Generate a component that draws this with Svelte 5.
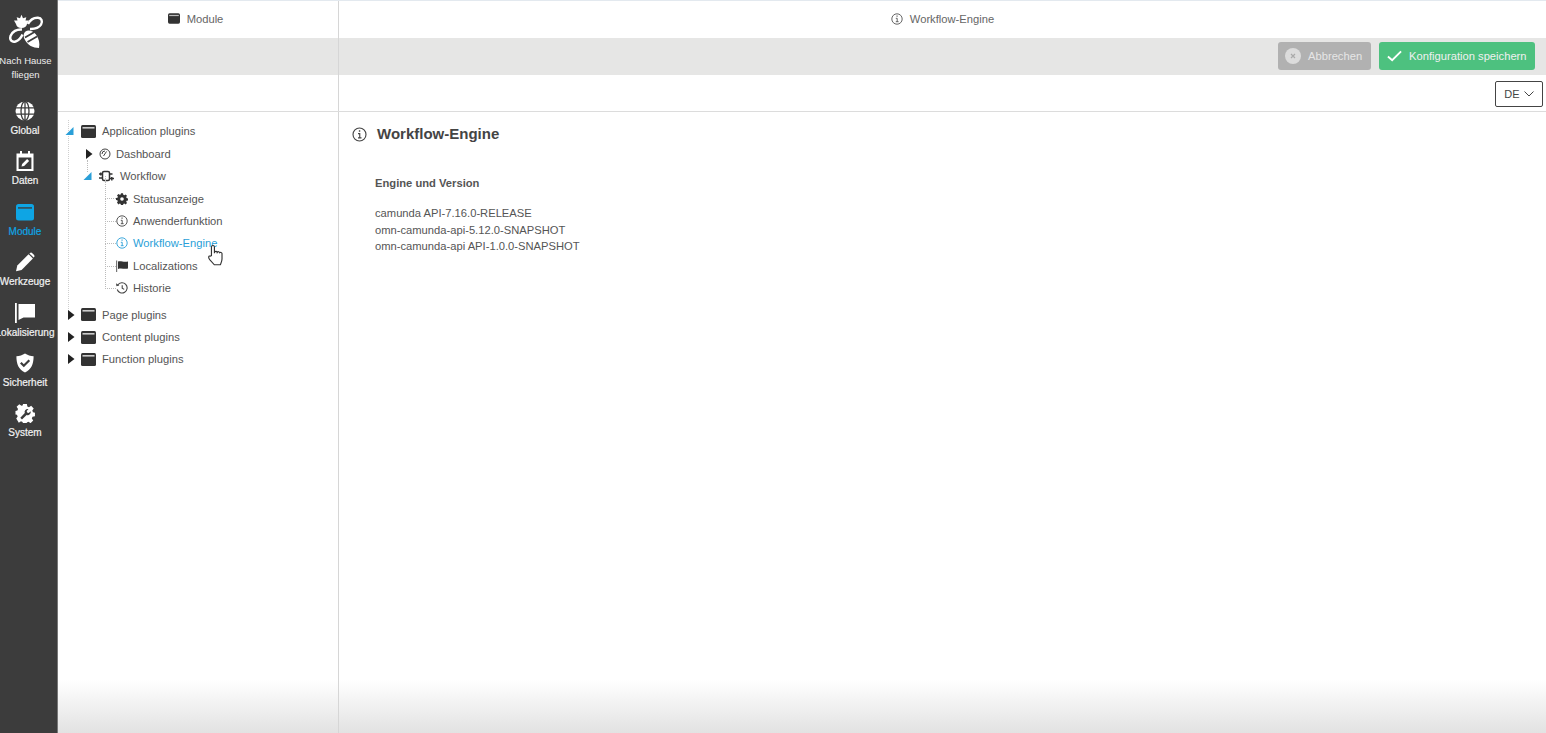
<script>
  const nav = [
    { id: 'globe', label: 'Global' },
    { id: 'cal', label: 'Daten' },
    { id: 'card', label: 'Module', active: true },
    { id: 'pencil', label: 'Werkzeuge' },
    { id: 'flag', label: 'Lokalisierung' },
    { id: 'shield', label: 'Sicherheit' },
    { id: 'gear', label: 'System' }
  ];
  const wf = [
    { id: 'cog', label: 'Statusanzeige' },
    { id: 'info', label: 'Anwenderfunktion' },
    { id: 'info', label: 'Workflow-Engine', active: true },
    { id: 'flagS', label: 'Localizations' },
    { id: 'hist', label: 'Historie' }
  ];
  const others = ['Page plugins', 'Content plugins', 'Function plugins'];
  const lines = ['camunda API-7.16.0-RELEASE', 'omn-camunda-api-5.12.0-SNAPSHOT', 'omn-camunda-api API-1.0.0-SNAPSHOT'];
</script>

{#snippet icon(id)}
  {#if id === 'globe'}
    <svg viewBox="0 0 20 20" width="20" height="20"><circle cx="10" cy="10" r="9.5" fill="#fff"/><g fill="none" stroke="#3c3c3c" stroke-width="1.3"><ellipse cx="10" cy="10" rx="4" ry="9.5"/><path d="M10 0v20M.5 6.8h19M.5 13.2h19"/></g></svg>
  {:else if id === 'cal'}
    <svg viewBox="0 0 20 20" width="20" height="20"><path d="M5 0h2v2.5h6V0h2v2.5h3.5V20h-17V2.5H5z" fill="#fff"/><rect x="3.6" y="6.5" width="12.8" height="11.5" fill="#3c3c3c"/><path d="M6.5 15.500l.6-2.600 5-5 2 2-5 5z" fill="#fff"/></svg>
  {:else if id === 'card'}
    <svg viewBox="0 0 20 20" width="20" height="20"><rect x="1" y="2" width="18" height="16.500" rx="2.500" fill="#0ea5e4"/><rect x="3" y="5" width="14" height="1.800" fill="#3c3c3c" opacity=".75"/></svg>
  {:else if id === 'pencil'}
    <svg viewBox="0 0 20 20" width="20" height="20"><path d="M1 19.200l1.300-5.600L13.600 2.300l4.300 4.300L6.600 17.900z" fill="#fff"/><path d="M14.800 1.200a1.800 1.800 0 0 1 2.500 0l1.600 1.600a1.800 1.800 0 0 1 0 2.500l-.3.3-4.200-4.200z" fill="#fff"/></svg>
  {:else if id === 'flag'}
    <svg viewBox="0 0 20 20" width="20" height="20"><rect x="0" y="0" width="1.800" height="20" fill="#fff"/><path d="M3.500 1h16.500v13.500H8.500L3.500 17z" fill="#fff"/></svg>
  {:else if id === 'shield'}
    <svg viewBox="0 0 20 20" width="20" height="20"><path d="M10 .5c2.500 1.600 5.500 2.600 8.600 2.800C18.600 11 16.400 16.600 10 19.500 3.600 16.600 1.400 11 1.400 3.300 4.500 3.100 7.500 2.100 10 .5z" fill="#fff"/><path d="M5.800 9.800l3 3 5.500-5.500" fill="none" stroke="#3c3c3c" stroke-width="2.200"/></svg>
  {:else if id === 'gear'}
    <svg viewBox="0 0 20 20" width="20" height="20"><path d="M8 .5h4l.5 2.700 1.700.7 2.300-1.500 2.700 2.800-1.500 2.300.7 1.700 2.100.5v3.800l-2.600.5-.7 1.700 1.500 2.300-2.800 2.700-2.300-1.500-1.600.7-.5 1.800H8l-.5-2.200-1.700-.7-2.300 1.500L.8 15.900l1.500-2.300-.7-1.700L0 11.500V8l2-.5.700-1.700-1.500-2.300L4 .8l2.300 1.500L7.500 2z" fill="#fff" transform="scale(.95) translate(.5 .5)"/><path d="M5.300 14.800l4.500-4.700a3 3 0 0 1 3.700-4l-1.800 1.800.4 1.700 1.700.4 1.800-1.800a3 3 0 0 1-4 3.700l-4.600 4.500z" fill="#3c3c3c"/></svg>
  {:else if id === 'cog'}
    <svg viewBox="0 0 12 12" width="12" height="12"><path d="M5 .3h2l.3 1.500 1 .4L9.600 1.400l1.400 1.400-.8 1.300.4 1 1.500.3v2l-1.500.3-.4 1 .8 1.300-1.400 1.400-1.300-.8-1 .4-.3 1.500H5l-.3-1.500-1-.4-1.300.8L1 9.600l.8-1.300-.4-1L0 7V5l1.500-.3.400-1L1 2.400 2.400 1l1.300.8 1-.4z" fill="#333"/><circle cx="6" cy="6" r="1.800" fill="#fff"/></svg>
  {:else if id === 'info'}
    <svg viewBox="0 0 12 12" width="12" height="12" fill="none" stroke="currentColor"><circle cx="6" cy="6" r="5.200" stroke-width=".9"/><path d="M4.800 5.300H6.200V8.700M4.800 8.700h2.800" stroke-width=".9"/><path d="M5.500 3.200h1.100" stroke-width="1.200"/></svg>
  {:else if id === 'flagS'}
    <svg viewBox="0 0 12 12" width="12" height="12"><path d="M0 .5h1.200V12H0z" fill="#777"/><path d="M2 1.500c3-1 5.500 1 10 0v7c-4 1-6.500-1-10 .5z" fill="#333"/></svg>
  {:else if id === 'hist'}
    <svg viewBox="0 0 12 12" width="12" height="12" fill="none" stroke="#444" stroke-width="1.100"><path d="M1.800 3A5.100 5.100 0 1 1 1.200 7.500"/><path d="M6.200 3.200v3l2 1.200"/><path d="M0 1.200l.4 3 3-.6z" fill="#444" stroke="none"/></svg>
  {/if}
{/snippet}

{#snippet mod(size)}
  <svg class="mod" viewBox="0 0 15 13" width={size} height={size * 13 / 15}><rect width="15" height="13" rx="1.500" fill="#333"/><rect x="1.500" y="2" width="12" height="1.600" fill="#ccc"/></svg>
{/snippet}

{#snippet open()}
  <svg class="tog" viewBox="0 0 8 8" width="8" height="8"><path d="M0 8L8 0v8z" fill="#2a9fd8"/></svg>
{/snippet}
{#snippet closed()}
  <svg class="tog shut" viewBox="0 0 7 10" width="7" height="10"><path d="M0 0l6.500 5L0 10z" fill="#222"/></svg>
{/snippet}

<div class="shell">
  <nav class="side">
    <div class="home">
      <svg viewBox="0 0 36 34" width="36" height="34">
        <path d="M6 6.500l3.500 0-.8-3.300 3.300 1L13.500.8 15 4.200l3.300-1-.8 3.300 3.500 0-2 3.500c-.5 2.500-2.500 4-5.500 4s-5-1.500-5.500-4z" fill="#fff"/>
        <g fill="none" stroke="#fff" stroke-width="2.400">
          <path d="M20 10c2-4 6-6.500 10-6.300 3.500.2 5 3.500 3 7-2 3-6 4.500-11 4.300"/>
          <path d="M14 15.500c-5-.5-10 2-11.500 6.500-1.200 4 1.500 6.500 5 5.500 3-1 5.500-3.500 7-7"/>
        </g>
        <path d="M31 34c-6 0-11.500-3-14-8-2-3.500-1.500-7 .5-8.500 3-2 7.500-.5 10.500 3 3 4 4 9 3 13.500z" fill="#fff"/>
        <path d="M17 23.500l9.500-5.500M19.500 28l9.500-5.500" stroke="#3c3c3c" stroke-width="1.800" fill="none"/>
      </svg>
      <span>Nach Hause<br>fliegen</span>
    </div>
    {#each nav as n}
      <div class="nav" class:active={n.active}>
        {@render icon(n.id)}
        <span>{n.label}</span>
      </div>
    {/each}
  </nav>

  <main class="main">
    <div class="row head">
      <div class="left c shift">
        <svg viewBox="0 0 15 13" width="12" height="11"><rect width="15" height="13" rx="2" fill="#333"/><rect x="1.500" y="2" width="12" height="1.500" fill="#bbb"/></svg>
        <span>Module</span>
      </div>
      <div class="right c">
        <span class="gi">{@render icon('info')}</span>
        <span>Workflow-Engine</span>
      </div>
    </div>

    <div class="row bar">
      <div class="left"></div>
      <div class="right actions">
        <button class="btn cancel">
          <svg viewBox="0 0 16 16" width="16" height="16"><circle cx="8" cy="8" r="8" fill="#dcdcdc"/><path d="M6 6l4 4M10 6l-4 4" stroke="#aaa" stroke-width="1.200"/></svg>
          Abbrechen
        </button>
        <button class="btn save">
          <svg viewBox="0 0 16 12" width="15" height="12"><path d="M1 6.500l4.500 4L15 1" fill="none" stroke="#fff" stroke-width="2"/></svg>
          Konfiguration speichern
        </button>
      </div>
    </div>

    <div class="row sub">
      <div class="left"></div>
      <div class="right lang">
        <div class="select">DE <svg viewBox="0 0 10 6" width="10" height="6"><path d="M.5.5L5 5 9.500.5" fill="none" stroke="#444"/></svg></div>
      </div>
    </div>

    <div class="row body">
      <div class="left tree">
        <ul class="l0">
          <li>
            <div class="node">{@render open()}{@render mod(15)}<span>Application plugins</span></div>
            <ul class="l1">
              <li><div class="node">{@render closed()}<span class="ti"><svg viewBox="0 0 12 12" width="12" height="12" fill="none" stroke="#444"><circle cx="6" cy="6" r="5"/><path d="M4.500 8L7.500 3.500"/><path d="M3 6a3 3 0 0 1 3-3"/></svg></span><span>Dashboard</span></div></li>
              <li>
                <div class="node">{@render open()}<span class="ti wide"><svg viewBox="0 0 15 12" width="15" height="12" fill="none" stroke="#333" stroke-width="1.500"><rect x="3.500" y="1.500" width="7" height="9" rx="1.500"/><path d="M0 4h3.500M0 8h3.500M10.500 4h3M10.500 8.500h4.500M1.800 2.500v3M12.800 7v3.500"/></svg></span><span>Workflow</span></div>
                <ul class="l2">
                  {#each wf as w}
                    <li class:active={w.active}><div class="node"><span class="ti">{@render icon(w.id)}</span><span>{w.label}</span></div></li>
                  {/each}
                </ul>
              </li>
            </ul>
          </li>
          {#each others as o}
            <li><div class="node">{@render closed()}{@render mod(15)}<span>{o}</span></div></li>
          {/each}
        </ul>
        <svg class="cursor" viewBox="1 0 13.500 19" width="15.500" height="22"><path d="M4 10V2.500a1.300 1.300 0 0 1 2.600 0V8l.2-1.200c.6-.8 2-.6 2.200.4.500-.9 2-.7 2.200.3.600-.6 2-.3 2 .8V13c0 2-.6 3-1.500 5H6.500L2.500 13.500C1 11.500 1.500 10 3 10.500z" fill="#fff" stroke="#333" stroke-width="1"/></svg>
      </div>
      <div class="right content">
        <h1><span class="hi">{@render icon('info')}</span>Workflow-Engine</h1>
        <h2>Engine und Version</h2>
        {#each lines as l}<p>{l}</p>{/each}
      </div>
    </div>
    <div class="fade"></div>
  </main>
</div>

<style>
  :global(body) { margin: 0; background: #fff; }
  .shell { display: flex; height: 733px; overflow: hidden; font-family: "Liberation Sans", Arial, sans-serif; color: #555; font-size: 11.200px; }
  .side { width: 58px; box-sizing: border-box; flex: none; background: #3c3c3c; border-right: 1px solid #777; color: #f2f2f2; display: flex; flex-direction: column; overflow: hidden; }
  .home { width: 51px; display: flex; flex-direction: column; align-items: center; padding-top: 14px; font-size: 9.500px; line-height: 14px; text-align: center; height: 82px; box-sizing: border-box; color: #eee; }
  .home svg { flex: none; }
  .home span { margin-top: 6px; white-space: nowrap; }
  .nav { width: 50px; height: 50.400px; display: flex; flex-direction: column; align-items: center; padding-top: 19px; box-sizing: border-box; flex: none; }
  .nav svg { flex: none; }
  .nav span { white-space: nowrap; line-height: 12px; font-size: 10px; -webkit-text-stroke: .2px currentColor; margin-top: 4px; flex: none; }
  .nav.active { color: #0ea5e4; }
  .main { flex: 1; display: flex; flex-direction: column; position: relative; min-width: 0; }
  .row { display: flex; position: relative; z-index: 1; }
  .left { width: 281px; box-sizing: border-box; flex: none; border-right: 1px solid #d6d6d6; }
  .right { flex: 1; min-width: 0; }
  .head { height: 38px; border-top: 1px solid #e3e9ef; box-sizing: border-box; }
  .c { display: flex; align-items: center; justify-content: center; gap: 7px; padding-bottom: 2px; color: #666; }
  .shift { padding-right: 5px; }
  .gi { display: flex; color: #555; }
  .bar { height: 37px; background: #e6e6e5; }
  .actions { display: flex; justify-content: flex-end; align-items: flex-start; gap: 8px; padding: 4px 11px 0 0; }
  .btn { height: 28px; border: 0; border-radius: 3px; display: flex; align-items: center; font: inherit; color: #f0f0f0; padding: 0; white-space: nowrap; }
  .cancel { width: 93px; background: #b1b1b1; gap: 7px; padding-left: 7px; color: #e6e6e6; }
  .save { width: 156px; background: #4dc17f; gap: 7px; padding-left: 8px; }
  .sub { height: 37px; border-bottom: 1px solid #dcdcdc; box-sizing: border-box; }
  .lang { display: flex; justify-content: flex-end; align-items: flex-start; padding: 6px 3px 0 0; }
  .select { width: 48px; height: 26px; box-sizing: border-box; border: 1px solid #444; border-radius: 2px; display: flex; align-items: center; justify-content: center; gap: 4px; font-size: 11px; color: #444; }
  .body { flex: 1; }
  .tree { position: relative; padding-top: 8.300px; }
  ul { list-style: none; margin: 0; padding: 0; }
  .node { height: 22.400px; display: flex; align-items: center; white-space: nowrap; position: relative; }
  .l0 { padding-left: 7px; }
  .l0 > li:first-child { position: relative; }
  .l0 > li:first-child::before { content: ""; position: absolute; left: 3px; top: 0; bottom: -12px; border-left: 1px dotted #cfcfcf; }
  .tog { width: 9px; margin-right: 7px; flex: none; }
  .tog.shut { width: 7px; margin-left: 3px; margin-right: 6px; }
  .mod { flex: none; margin-right: 6px; }
  .l1 { padding-left: 18px; }
  .l1 > li { position: relative; }
  .l1 > li:first-child::before { content: ""; position: absolute; left: 4px; top: 17px; height: 12px; border-left: 1px dotted #bbb; }
  .ti { display: inline-flex; width: 12px; margin-right: 5px; flex: none; color: #444; }
  .ti.wide { width: 15px; margin-right: 6px; }
  .l2 { padding-left: 33px; margin-bottom: 4px; position: relative; }
  .l2 > li { position: relative; }
  .l2 > li::before { content: ""; position: absolute; left: -11px; top: -11px; height: 22px; width: 10px; border-left: 1px dotted #bbb; border-bottom: 1px dotted #bbb; }
  .l2 .active { color: #2a9fd8; }
  .l2 .active .ti { color: #2a9fd8; }
  .cursor { position: absolute; left: 150px; top: 132px; }
  .content { padding: 0 0 0 36px; position: relative; }
  h1 { margin: 13px 0 0 -23px; font-size: 15px; line-height: 18px; font-weight: 700; color: #444; display: flex; align-items: center; }
  .hi { display: flex; margin-right: 10px; color: #444; }
  .hi :global(svg) { width: 15px; height: 15px; }
  h2 { margin: 33px 0 15px; font-size: 11.200px; line-height: 14px; font-weight: 700; color: #555; }
  p { margin: 0; font-size: 11.200px; line-height: 16.500px; color: #555; }
  .fade { position: absolute; left: 0; right: 0; bottom: 0; height: 53px; z-index: 0; background: linear-gradient(rgba(226,226,226,0), rgba(226,226,226,1)); pointer-events: none; }
</style>
